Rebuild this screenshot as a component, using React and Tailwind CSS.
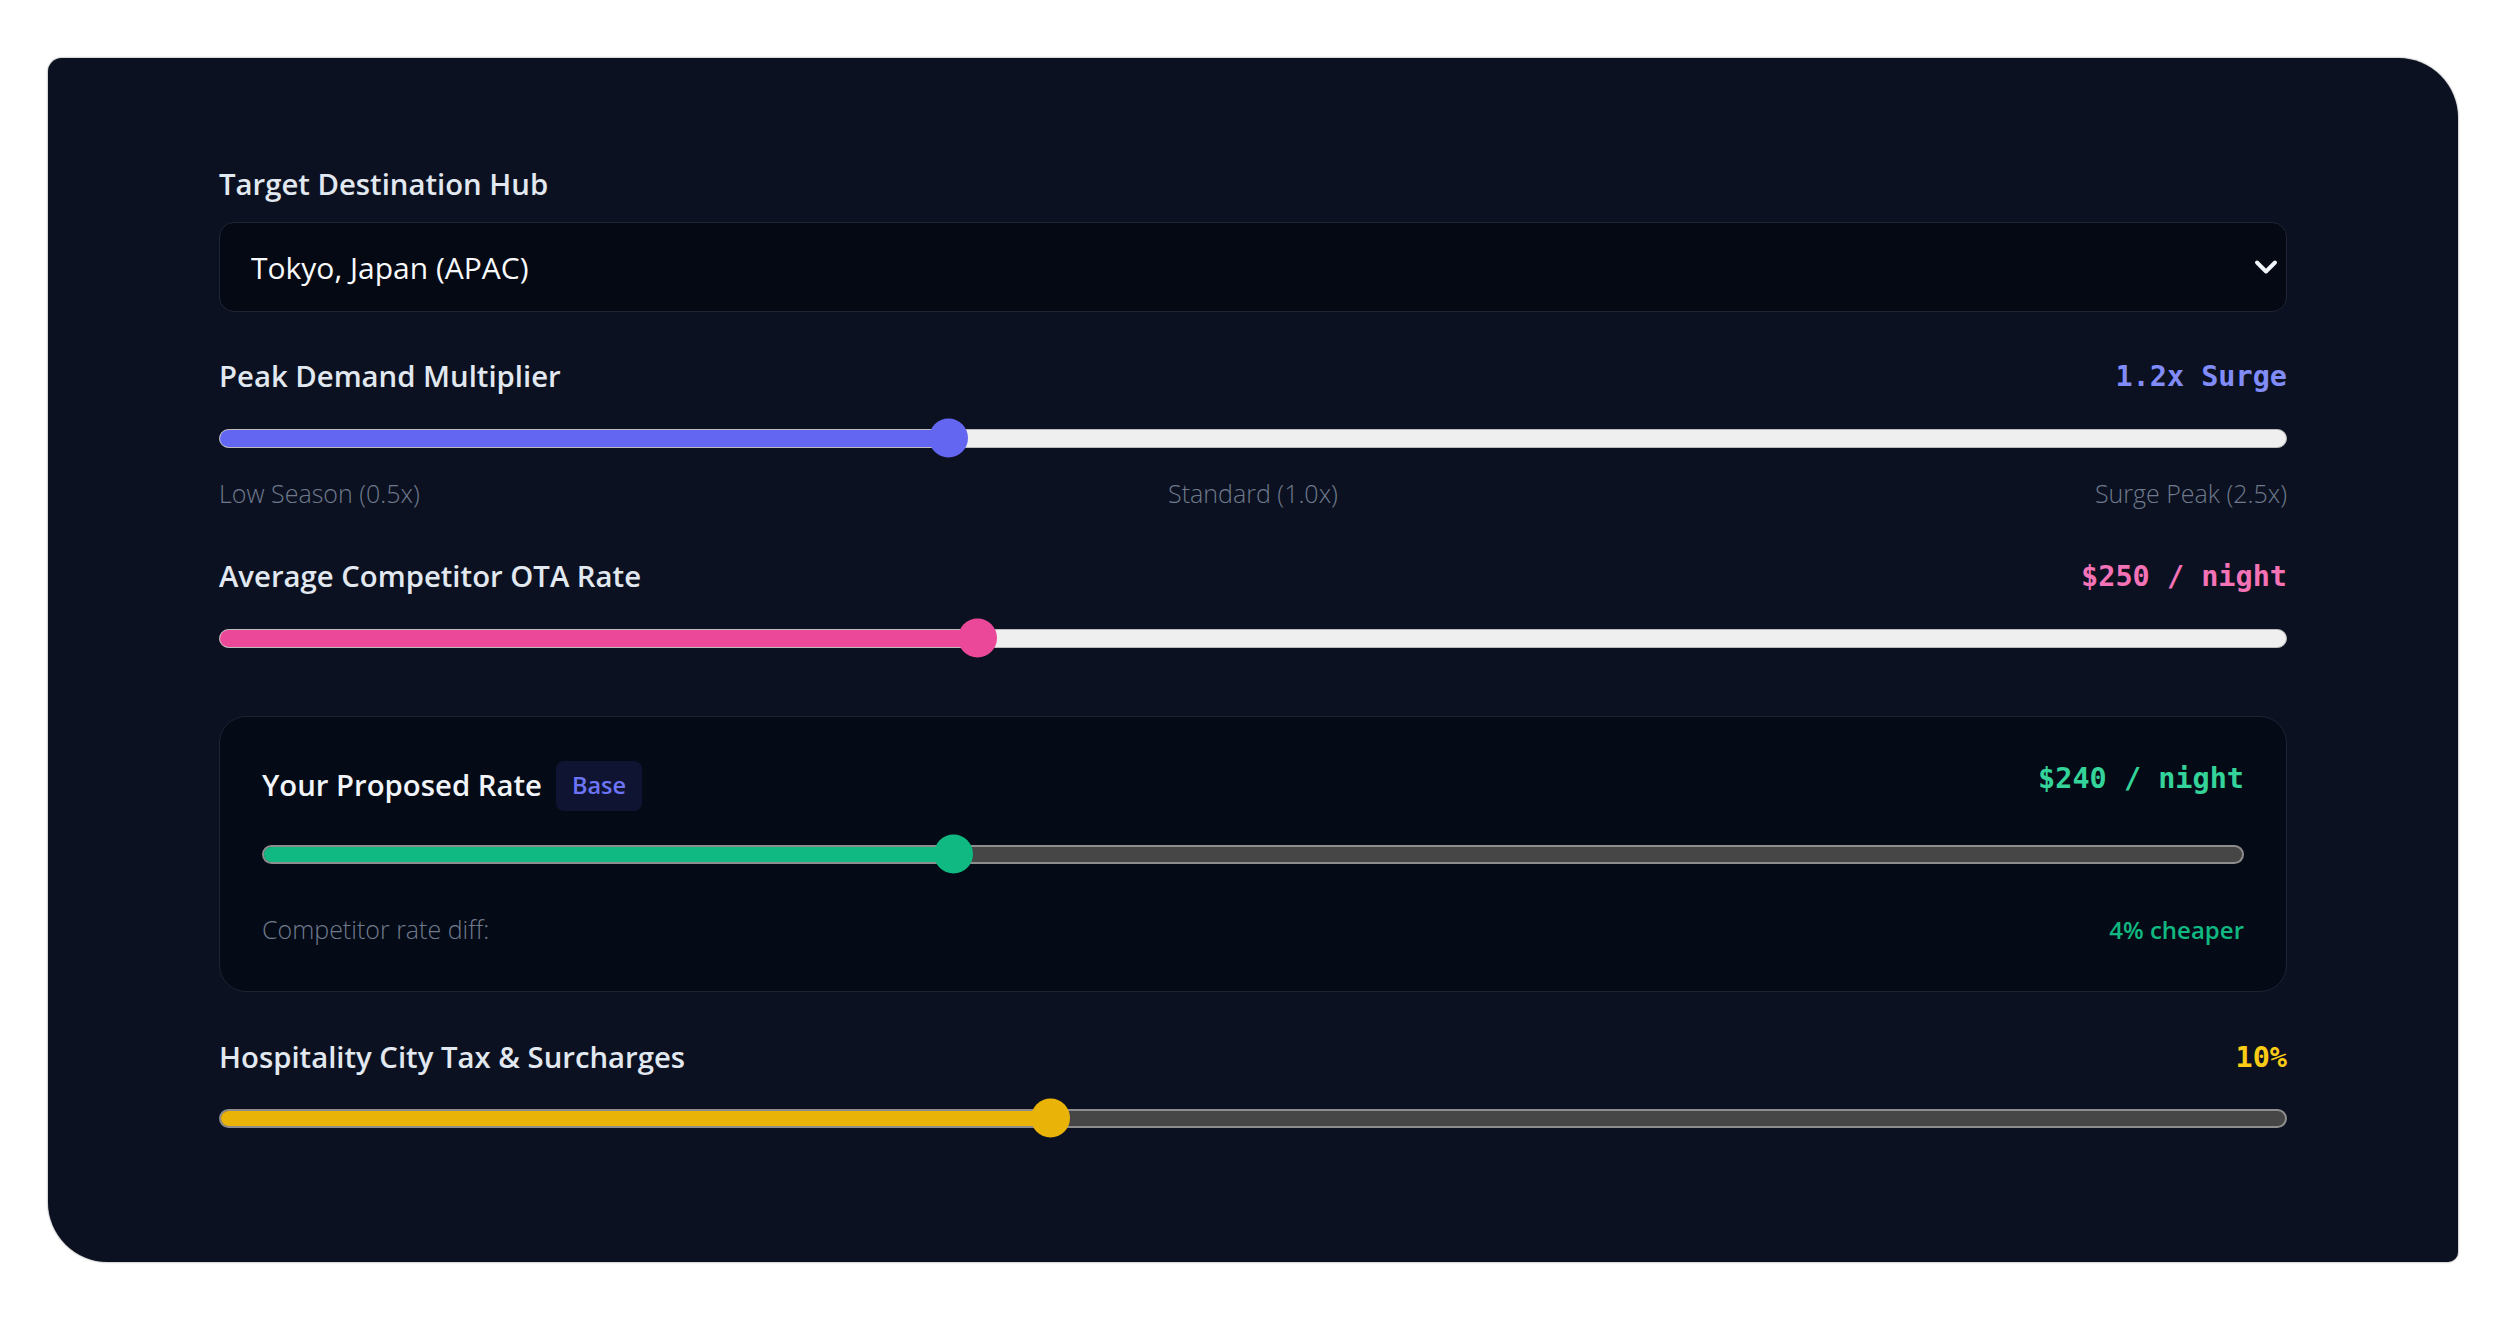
import React from "react";
import { ChevronDown } from "lucide-react";

const SANS = "font-['Open_Sans','Liberation_Sans',sans-serif]";
const MONO = "font-['DejaVu_Sans_Mono','Liberation_Mono',monospace]";

// Range-style track with a filled part up to the thumb centre.
function Slider({ frac, fill, dark }) {
  return (
    <div className="relative flex h-[40px] items-center">
      <div
        className={
          dark
            ? "h-[19px] w-full overflow-hidden rounded-full border-2 border-[#8d8d8d] bg-[#464646]"
            : "h-[19px] w-full overflow-hidden rounded-full border border-[#bcbcbc] bg-[#efefef]"
        }
      >
        <div
          className={`h-full ${fill}`}
          style={{ width: `calc(19.5px + ${frac} * (100% - 39px))` }}
        />
      </div>
      <div
        className={`absolute top-1/2 h-[39px] w-[39px] -translate-y-1/2 rounded-full ${fill}`}
        style={{ left: `calc(${frac} * (100% - 39px))` }}
      />
    </div>
  );
}

function FieldHeader({ label, value, valueColor }) {
  return (
    <div className="flex h-[42px] items-center justify-between">
      <span className="text-[29.3px] font-semibold text-[#e2e8f0]">{label}</span>
      {value && (
        <span className={`${MONO} text-[28.5px] font-bold ${valueColor}`}>{value}</span>
      )}
    </div>
  );
}

export default function App() {
  return (
    <div className={`${SANS} min-h-screen bg-white pl-[48px] pr-[49px] pt-[58px] pb-[59px]`}>
      <div className="rounded-tl-[14px] rounded-tr-[60px] rounded-bl-[60px] rounded-br-[10px] bg-[#0b1121] px-[171px] pt-[106px] pb-[124px] shadow-[0_0_2px_rgba(0,0,0,0.6)]">
        {/* Destination */}
        <FieldHeader label="Target Destination Hub" />
        <div className="mt-[16px] flex h-[90px] items-center justify-between rounded-[15px] border border-[#1e2534] bg-[#050914] pl-[31px] pr-[2px]">
          <span className="text-[30px] text-[#f8fafc]">Tokyo, Japan (APAC)</span>
          <ChevronDown size={36} strokeWidth={2.6} className="text-[#f1f5f9]" />
        </div>

        {/* Demand multiplier */}
        <div className="mt-[44px]">
          <FieldHeader label="Peak Demand Multiplier" value="1.2x Surge" valueColor="text-[#818cf8]" />
        </div>
        <div className="mt-[20px]">
          <Slider frac={0.35} fill="bg-[#6366f1]" />
        </div>
        <div className="mt-[17px] grid h-[30px] grid-cols-3 items-center text-[25px] font-light text-[#6f7a8c]">
          <span>Low Season (0.5x)</span>
          <span className="text-center">Standard (1.0x)</span>
          <span className="text-right">Surge Peak (2.5x)</span>
        </div>

        {/* Competitor rate */}
        <div className="mt-[51px]">
          <FieldHeader label="Average Competitor OTA Rate" value="$250 / night" valueColor="text-[#f472b6]" />
        </div>
        <div className="mt-[20px]">
          <Slider frac={0.364} fill="bg-[#ec4899]" />
        </div>

        {/* Proposed rate panel */}
        <div className="mt-[58px] rounded-[27px] border-[1.5px] border-[#1c2333] bg-[#050a17] px-[42px] pt-[44px] pb-[46px]">
          <div className="flex items-start justify-between">
            <div className="flex h-[50px] items-center gap-[14px]">
              <span className="text-[29.3px] font-semibold text-[#f1f5f9]">Your Proposed Rate</span>
              <span className="flex h-[50px] items-center rounded-[8px] bg-[#0e1432] px-[16px] text-[23.5px] font-semibold text-[#6d74f5]">
                Base
              </span>
            </div>
            <span className={`${MONO} text-[28.5px] font-bold leading-[36px] text-[#34d399]`}>
              $240 / night
            </span>
          </div>
          <div className="mt-[23px]">
            <Slider frac={0.346} fill="bg-[#10b981]" dark />
          </div>
          <div className="mt-[41px] flex h-[30px] items-center justify-between">
            <span className="text-[25px] font-light text-[#6f7a8c]">Competitor rate diff:</span>
            <span className="text-[24px] font-semibold text-[#10b981]">4% cheaper</span>
          </div>
        </div>

        {/* Tax */}
        <div className="mt-[45px]">
          <FieldHeader label="Hospitality City Tax & Surcharges" value="10%" valueColor="text-[#facc15]" />
        </div>
        <div className="mt-[19px]">
          <Slider frac={0.4} fill="bg-[#eab308]" dark />
        </div>
      </div>
    </div>
  );
}
